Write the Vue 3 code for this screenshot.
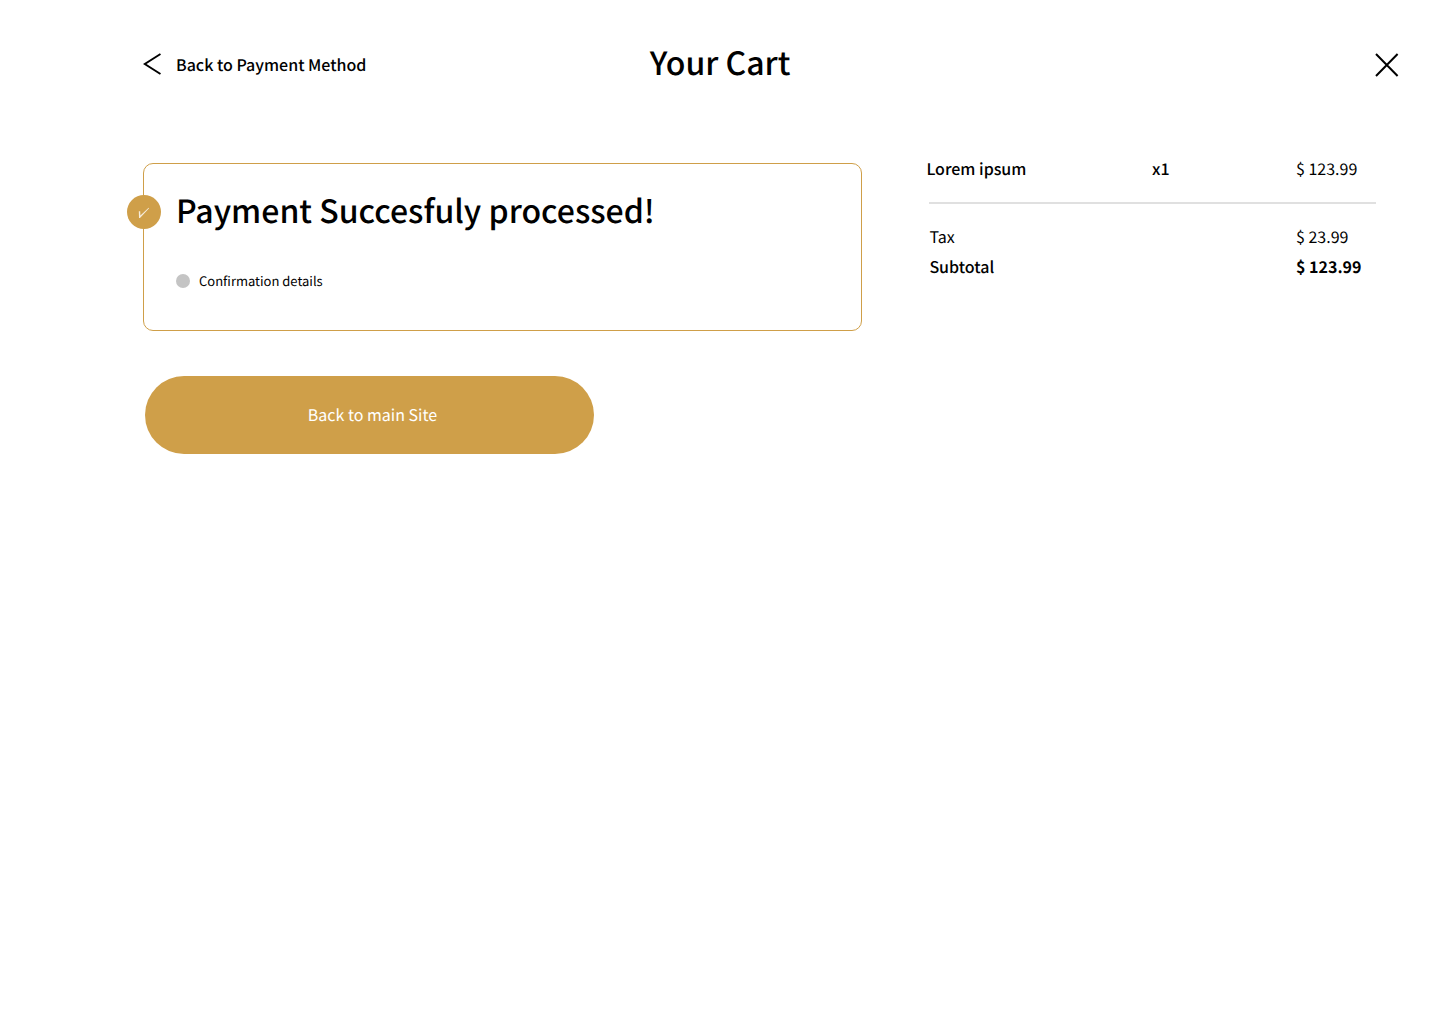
<script setup>
const items = [{ name: 'Lorem ipsum', quantity: 1, price: '$ 123.99' }]
const totals = [
  { label: 'Tax', amount: '$ 23.99', strong: false },
  { label: 'Subtotal', amount: '$ 123.99', strong: true }
]
</script>

<template>
  <div class="page">
    <header class="header">
      <a class="back" href="#payment-method">
        <svg width="18" height="24" viewBox="0 0 18 24" fill="none" aria-hidden="true">
          <path d="M17.5 2 L1.8 12 L17.5 22" stroke="#000" stroke-width="2" />
        </svg>
        <span>Back to Payment Method</span>
      </a>
      <h1 class="title">Your Cart</h1>
      <button class="close" type="button" aria-label="Close">
        <svg width="24" height="26" viewBox="0 0 24 26" fill="none" aria-hidden="true">
          <path d="M1 3 L22.6 25 M22.6 3 L1 25" stroke="#000" stroke-width="2" />
        </svg>
      </button>
    </header>

    <main class="content">
      <div class="result">
        <section class="card">
          <span class="badge">
            <svg width="12" height="14" viewBox="0 0 12 14" fill="none" aria-hidden="true">
              <path d="M0.8 6.2 L2.2 6.2 L2.4 10.6 L10.6 2.8 L11.1 3.3 L2 13 L1 13 Z" fill="#fff" fill-opacity="0.8" />
            </svg>
          </span>
          <h2 class="message">Payment Succesfuly processed!</h2>
          <p class="details"><span class="dot"></span>Confirmation details</p>
        </section>
        <button class="primary" type="button">Back to main Site</button>
      </div>

      <aside class="summary">
        <table class="items">
          <tbody>
            <tr v-for="item in items" :key="item.name">
              <th scope="row">{{ item.name }}</th>
              <td class="quantity">x{{ item.quantity }}</td>
              <td class="amount">{{ item.price }}</td>
            </tr>
          </tbody>
        </table>
        <div class="totals">
          <table>
            <tbody>
              <tr v-for="row in totals" :key="row.label" :class="{ strong: row.strong }">
                <th scope="row">{{ row.label }}</th>
                <td class="amount">{{ row.amount }}</td>
              </tr>
            </tbody>
          </table>
        </div>
      </aside>
    </main>
  </div>
</template>

<style>
body {
  margin: 0;
  background: #fff;
}
</style>

<style scoped>
.page {
  color: #000;
  font-family: "Noto Sans CJK JP", "Noto Sans", sans-serif;
  font-size: 16px;
  line-height: 30px;
  text-rendering: geometricPrecision;
}

.header {
  display: grid;
  grid-template-columns: 1fr auto 1fr;
  align-items: center;
  padding: 38px 41px;
}

.back {
  display: flex;
  align-items: center;
  gap: 15px;
  margin-left: 102px;
  color: inherit;
  font-weight: 500;
  text-decoration: none;
}

.title,
.message {
  margin: 0;
  font-size: 32px;
  font-weight: 500;
  line-height: 48px;
}

.title {
  padding-bottom: 4px;
}

.close {
  justify-self: end;
  display: flex;
  padding: 0;
  border: 0;
  background: none;
  cursor: pointer;
}

.content {
  display: grid;
  grid-template-columns: 8fr 5fr;
  gap: 64px;
  padding: 25px 64px 64px 143px;
}

.result {
  padding-top: 10px;
}

.card {
  position: relative;
  padding: 22px 32px 39px;
  border: 1px solid #cf9f49;
  border-radius: 10px;
}

.badge {
  position: absolute;
  top: 31px;
  left: -17px;
  display: flex;
  align-items: center;
  justify-content: center;
  width: 34px;
  height: 34px;
  border-radius: 50%;
  background: #cf9f49;
}

.details {
  display: flex;
  align-items: center;
  gap: 9px;
  margin: 37px 0 0;
  font-size: 13px;
  line-height: 20px;
}

.dot {
  width: 14px;
  height: 14px;
  border-radius: 50%;
  background: #c4c4c4;
}

.primary {
  width: 449px;
  max-width: 100%;
  margin: 45px 0 0 2px;
  padding: 23px 24px 25px 30px;
  border: 0;
  border-radius: 39px;
  background: #cf9f49;
  color: #fff;
  font: inherit;
  text-rendering: inherit;
  cursor: pointer;
}

table {
  width: 100%;
  border-collapse: collapse;
}

th,
td {
  padding: 0;
  font-weight: 400;
  text-align: left;
}

.items {
  margin-bottom: 19px;
}

.items th,
.quantity {
  font-weight: 500;
}

.quantity {
  width: 144px;
}

.amount {
  width: 80px;
}

.totals {
  margin-left: 3px;
  padding-top: 17px;
  border-top: 2px solid #e0e0e0;
}

.strong th {
  font-weight: 500;
}

.strong td {
  font-weight: 700;
}
</style>
